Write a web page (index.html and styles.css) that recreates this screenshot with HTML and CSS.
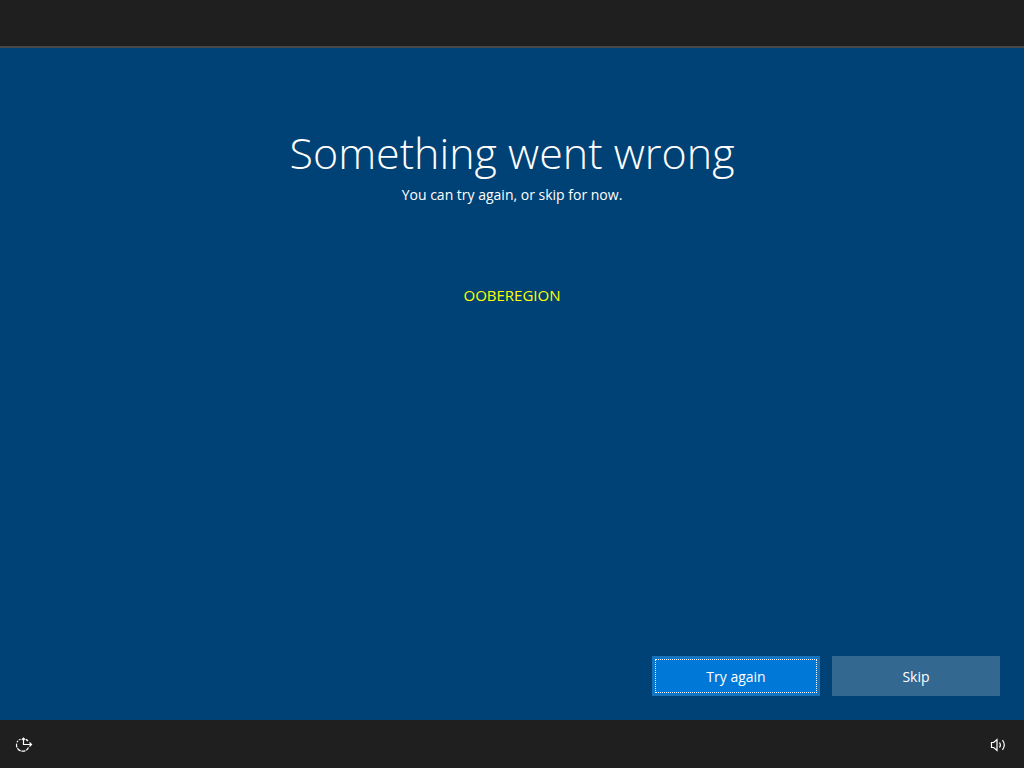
FILE: index.html
```html
<!DOCTYPE html>
<html lang="en">
<head>
<meta charset="utf-8">
<meta name="viewport" content="width=device-width, initial-scale=1">
<title>Something went wrong</title>
<link rel="stylesheet" href="styles.css">
</head>
<body>
<header class="top-bar"></header>
<main class="panel">
  <div class="message">
    <h1 class="title">Something went wrong</h1>
    <p class="subtitle">You can try again, or skip for now.</p>
    <p class="code">OOBEREGION</p>
  </div>
  <div class="actions">
    <button class="button button-primary" type="button">Try again</button>
    <button class="button button-secondary" type="button">Skip</button>
  </div>
</main>
<footer class="bottom-bar">
  <button class="icon-button" type="button" aria-label="Ease of access">
    <svg class="icon" viewBox="0 0 18 18" aria-hidden="true">
      <path d="M5.600 3.200A6.300 6.300 0 0 0 2 6.200" stroke-dasharray="2 1"/>
      <path d="M1.600 7.600A6.300 6.300 0 0 0 13.500 11.500" stroke-dasharray="4 0.800"/>
      <path d="M11 3.400A6.300 6.300 0 0 1 13 5"/>
      <path d="M8.500 2v6.500h8M6.700 3.800l1.800-1.800 1.800 1.800M14.500 6.500l2 2-2 2"/>
    </svg>
  </button>
  <button class="icon-button" type="button" aria-label="Volume">
    <svg class="icon" viewBox="0 0 18 18" aria-hidden="true">
      <path d="M2.500 6.500h2.200l3.300-3v11l-3.300-3H2.500z"/>
      <path d="M10.500 6.500q1.800 2.500 0 5M13.500 4.200q3.600 4.800 0 9.600"/>
    </svg>
  </button>
</footer>
</body>
</html>
```
FILE: styles.css
```css
* { box-sizing: border-box; }

body {
  margin: 0;
  min-height: 100vh;
  display: flex;
  flex-direction: column;
  background: #004275;
  color: #fff;
  font-family: "Open Sans", "Noto Sans", sans-serif;
  font-size: 14px;
  line-height: 20px;
}

.top-bar {
  height: 48px;
  background: #1f1f1f;
  border-bottom: 2px solid #484848;
}

.panel {
  flex: 1;
  display: flex;
  flex-direction: column;
  justify-content: space-between;
  padding: 75px 24px 24px;
}

.message { text-align: center; }

.title {
  margin: 0 0 2px;
  font-size: 43px;
  font-weight: 300;
  line-height: 60px;
}

.subtitle { margin: 0; }

.code {
  margin: 80px 0 0;
  color: #ff0;
  font-size: 15px;
}

.actions {
  display: flex;
  justify-content: flex-end;
  gap: 12px;
}

.button {
  width: 168px;
  height: 40px;
  padding: 2px 0 0;
  border: 0;
  color: inherit;
  font: inherit;
}

.button-primary {
  background: #0078d7;
  border: 2px solid #1a72b8;
  outline: 1px dotted #fff;
  outline-offset: -4px;
}

.button-secondary { background: #336891; }

.bottom-bar {
  height: 48px;
  display: flex;
  align-items: center;
  justify-content: space-between;
  padding: 2px 17px 0 15px;
  background: #1f1f1f;
}

.icon-button {
  display: flex;
  padding: 0;
  border: 0;
  background: none;
  color: inherit;
}

.icon {
  width: 18px;
  height: 18px;
  fill: none;
  stroke: currentColor;
  stroke-width: 1.2;
}
```
